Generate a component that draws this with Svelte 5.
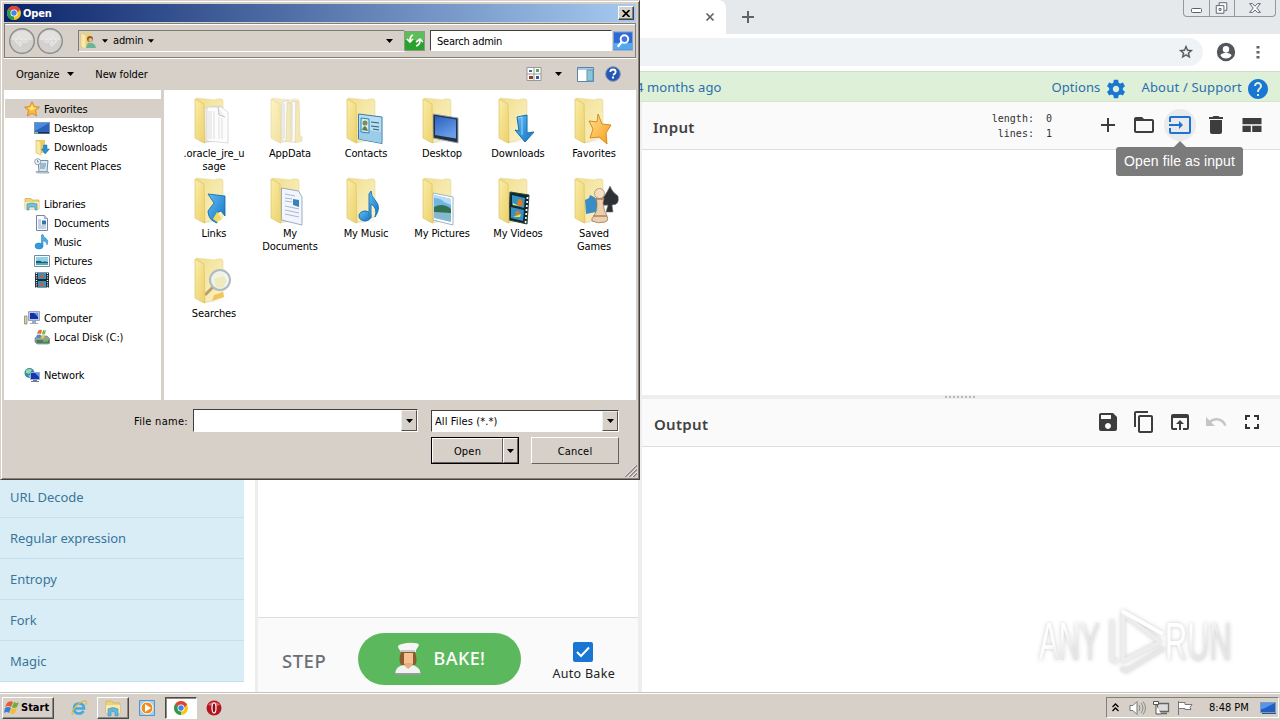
<script lang="ts">
	type Item = { icon: string; label: string; root?: boolean };

	const places: (Item | null)[] = [
		{ icon: 'star', label: 'Favorites', root: true },
		{ icon: 'desktop', label: 'Desktop' },
		{ icon: 'downloads', label: 'Downloads' },
		{ icon: 'recent', label: 'Recent Places' },
		null,
		{ icon: 'libraries', label: 'Libraries', root: true },
		{ icon: 'document', label: 'Documents' },
		{ icon: 'music', label: 'Music' },
		{ icon: 'picture', label: 'Pictures' },
		{ icon: 'video', label: 'Videos' },
		null,
		{ icon: 'computer', label: 'Computer', root: true },
		{ icon: 'disk', label: 'Local Disk (C:)' },
		null,
		{ icon: 'network', label: 'Network', root: true }
	];

	const files = [
		{ kind: 'oracle', lines: ['.oracle_jre_u', 'sage'] },
		{ kind: 'appdata', lines: ['AppData'] },
		{ kind: 'contacts', lines: ['Contacts'] },
		{ kind: 'desktop', lines: ['Desktop'] },
		{ kind: 'downloads', lines: ['Downloads'] },
		{ kind: 'favorites', lines: ['Favorites'] },
		{ kind: 'links', lines: ['Links'] },
		{ kind: 'documents', lines: ['My', 'Documents'] },
		{ kind: 'music', lines: ['My Music'] },
		{ kind: 'pictures', lines: ['My Pictures'] },
		{ kind: 'videos', lines: ['My Videos'] },
		{ kind: 'games', lines: ['Saved', 'Games'] },
		{ kind: 'searches', lines: ['Searches'] }
	];

	const operations = ['URL Decode', 'Regular expression', 'Entropy', 'Fork', 'Magic'];

	// 24x24 outlines used by the pane headers
	const inputIcons = [
		{ name: 'add', d: 'M19 13h-6v6h-2v-6H5v-2h6V5h2v6h6v2z' },
		{ name: 'folder', d: 'M20 6h-8l-2-2H4c-1.1 0-2 .9-2 2v12c0 1.1.9 2 2 2h16c1.1 0 2-.9 2-2V8c0-1.1-.9-2-2-2zm0 12H4V8h16v10z' },
		{ name: 'input', d: 'M21 3.01H3c-1.1 0-2 .9-2 2V9h2V4.99h18v14.03H3V15H1v4.01c0 1.1.9 1.98 2 1.98h18c1.1 0 2-.88 2-1.98v-14c0-1.11-.9-2-2-2zM11 16l4-4-4-4v3H1v2h10v3z' },
		{ name: 'delete', d: 'M6 19c0 1.1.9 2 2 2h8c1.1 0 2-.9 2-2V7H6v12zM19 4h-3.5l-1-1h-5l-1 1H5v2h14V4z' },
		{ name: 'layout', d: 'M2.5 5h19v6.3h-19zM2.5 12.7h8.3V19H2.5zM12.2 12.7h9.3V19h-9.3z' }
	];
	const outputIcons = [
		{ name: 'save', d: 'M17 3H5c-1.11 0-2 .9-2 2v14c0 1.1.89 2 2 2h14c1.1 0 2-.9 2-2V7l-4-4zm-5 16c-1.66 0-3-1.34-3-3s1.34-3 3-3 3 1.34 3 3-1.34 3-3 3zm3-10H5V5h10v4z' },
		{ name: 'copy', d: 'M16 1H4c-1.1 0-2 .9-2 2v14h2V3h12V1zm3 4H8c-1.1 0-2 .9-2 2v14c0 1.1.9 2 2 2h11c1.1 0 2-.9 2-2V7c0-1.1-.9-2-2-2zm0 16H8V7h11v14z' },
		{ name: 'popup', d: 'M19 4H5c-1.11 0-2 .9-2 2v12c0 1.1.89 2 2 2h4v-2H5V8h14v10h-4v2h4c1.1 0 2-.9 2-2V6c0-1.1-.89-2-2-2zm-7 6l-4 4h3v6h2v-6h3l-4-4z' },
		{ name: 'undo', d: 'M12.5 8c-2.65 0-5.05.99-6.9 2.6L2 7v9h9l-3.62-3.62c1.39-1.16 3.16-1.88 5.12-1.88 3.54 0 6.55 2.31 7.6 5.5l2.37-.78C21.08 11.03 17.15 8 12.5 8z' },
		{ name: 'fullscreen', d: 'M6 10V6h4M14 6h4v4M18 14v4h-4M10 18H6v-4' }
	];
	const help = 'M12 2C6.48 2 2 6.48 2 12s4.48 10 10 10 10-4.48 10-10S17.52 2 12 2zm1 17h-2v-2h2v2zm2.07-7.75l-.9.92C13.45 12.9 13 13.5 13 15h-2v-.5c0-1.1.45-2.1 1.17-2.83l1.24-1.26c.37-.36.59-.86.59-1.41 0-1.1-.9-2-2-2s-2 .9-2 2H8c0-2.21 1.79-4 4-4s4 1.79 4 4c0 .88-.36 1.68-.93 2.25z';
	const gear = 'M19.43 12.98c.04-.32.07-.64.07-.98s-.03-.66-.07-.98l2.11-1.65c.19-.15.24-.42.12-.64l-2-3.46c-.12-.22-.39-.3-.61-.22l-2.49 1c-.52-.4-1.08-.73-1.69-.98l-.38-2.65C14.46 2.18 14.25 2 14 2h-4c-.25 0-.46.18-.49.42l-.38 2.65c-.61.25-1.17.59-1.69.98l-2.49-1c-.23-.09-.49 0-.61.22l-2 3.46c-.13.22-.07.49.12.64l2.11 1.65c-.04.32-.07.65-.07.98s.03.66.07.98l-2.11 1.65c-.19.15-.24.42-.12.64l2 3.46c.12.22.39.3.61.22l2.49-1c.52.4 1.08.73 1.69.98l.38 2.65c.03.24.24.42.49.42h4c.25 0 .46-.18.49-.42l.38-2.65c.61-.25 1.17-.59 1.69-.98l2.49 1c.23.09.49 0 .61-.22l2-3.46c.12-.22.07-.49-.12-.64l-2.11-1.65zM12 15.5c-1.93 0-3.5-1.57-3.5-3.5s1.57-3.5 3.5-3.5 3.5 1.57 3.5 3.5-1.57 3.5-3.5 3.5z';

	let autoBake = $state(true);
	let filename = $state('');
</script>

{#snippet arrow()}
	<svg class="arrow" width="7" height="4" viewBox="0 0 7 4"><path d="M0 0h7L3.5 4z" fill="#000" /></svg>
{/snippet}

{#snippet chrome(size: number)}
	<svg width={size} height={size} viewBox="0 0 16 16">
		<circle cx="8" cy="8" r="7" fill="#f5c71a" />
		<path d="M8 8 L1.94 4.5 A7 7 0 0 1 14.06 4.5z" fill="#dc4437" />
		<path d="M8 8 L1.94 4.5 A7 7 0 0 0 8 15z" fill="#2a9a50" />
		<path d="M8 4.5h6.06L11 8H8z" fill="#dc4437" />
		<circle cx="8" cy="8" r="3.5" fill="#fff" />
		<circle cx="8" cy="8" r="2.7" fill="#4384e8" />
	</svg>
{/snippet}

{#snippet smallIcon(name: string)}
	<svg width="16" height="16" viewBox="0 0 16 16">
		{#if name === 'star'}
			<path d="M8 .8l2.2 4.7 5.2.6-3.9 3.5 1.2 5.4L8 12.3 3.3 15l1.2-5.4L.6 6.1l5.2-.6z" fill="#fbbc3c" stroke="#d98520" stroke-width=".9" />
			<path d="M8 3l1.3 3.3 3 .5-5 3-3-3 2.5-.5z" fill="#ffe684" />
		{:else if name === 'desktop'}
			<rect x=".5" y="2.5" width="15" height="11" fill="#2d62bd" stroke="#7898b4" />
			<path d="M1 3h14L3 10l-2 1z" fill="#4b8add" />
			<path d="M1 12h14v1.5H1z" fill="#18315c" /><path d="M1 12h3v1.5H1z" fill="#8bd07f" />
		{:else if name === 'downloads'}
			<path d="M2 1h9v13H2z" fill="#e9ce68" /><path d="M2 1l5 2v13l-5-2z" fill="#f9e9a2" stroke="#d8b74d" stroke-width=".6" />
			<path d="M9.5 6H13v4h2.5l-4.3 5-3.7-5h2z" fill="#2a90dc" stroke="#1768ad" stroke-width=".5" />
		{:else if name === 'recent'}
			<path d="M4 2.5h10L13 14H5z" fill="#dce9f3" stroke="#7290a6" />
			<path d="M6 6h6M6 8h6M6 10h5" stroke="#6686a4" /><path d="M2 13.5h11q2 0 2 1.5H4q-2 0-2-1.5z" fill="#c5d7e4" stroke="#718ba0" stroke-width=".6" />
			<circle cx="3.7" cy="3.7" r="3" fill="#eff6fb" stroke="#789" stroke-width=".8" /><path d="M3.5 2v2H5" stroke="#567" stroke-width=".7" fill="none" />
		{:else if name === 'libraries'}
			<path d="M1 2.5h6L8 4h7v9H1z" fill="#eed67c" stroke="#c9a94c" stroke-width=".7" /><path d="M1 6h14v7H1z" fill="#f9e9ad" />
			<path d="M3 8q5-2 10 0v6h-2v-3H5v3H3z" fill="#72c2dc" stroke="#3a91b4" stroke-width=".6" />
		{:else if name === 'document'}
			<path d="M2.5.5h8l3 3v12h-11z" fill="#f8fbff" stroke="#7387a3" /><path d="M10.5.5v3h3" fill="#cad7e8" stroke="#7387a3" stroke-width=".6" />
			<path d="M4 5h3M4 7h3M4 9h3M4 11h8M4 13h8" stroke="#91a8c5" /><path d="M8 5.5h4v4H8z" fill="#3274ac" />
		{:else if name === 'music'}
			<ellipse cx="5" cy="12" rx="4" ry="3" fill="#2c9de0" stroke="#176eae" stroke-width=".5" />
			<path d="M7.5 1L9 .5q.5 3 3 4 3 2 1 6.5 0-3.5-4-4.5v6L7.500 12z" fill="#48aee6" stroke="#2277ad" stroke-width=".5" />
		{:else if name === 'picture'}
			<path d="M.5 2.5h15v11H.5z" fill="#fff" stroke="#738ca5" /><path d="M2 4h12v8H2z" fill="#8dd1ed" />
			<path d="M2 8q5-1 6 1 3-1 6 0v3H2z" fill="#1b606f" /><path d="M2 10h12v2H2z" fill="#58a8b0" />
		{:else if name === 'video'}
			<path d="M1 .5h14v15H1z" fill="#142936" /><path d="M4 1h8v6H4zM4 9h8v6H4z" fill="#3d90ba" />
			<path d="M5 6l3-4 3 4zM5 14l2-4 4 4z" fill="#bb6049" /><path d="M2.5 1v15M13.5 1v15" stroke="#fff" stroke-width="1.3" stroke-dasharray="1 1.3" />
		{:else if name === 'computer'}
			<path d="M.5 6H3v8H.5z" fill="#d8d49c" stroke="#77806e" stroke-width=".7" /><path d="M4.5 1.5h11v9h-11z" fill="#bac7de" stroke="#9aa5b9" />
			<path d="M6 3h8v6H6z" fill="#1530aa" /><path d="M10 3h4v4z" fill="#6191ed" /><path d="M8 11h4v2h2v1H6v-1h2z" fill="#9cabb8" />
		{:else if name === 'disk'}
			<path d="M1 9l3-2h9l3 3v4l-2 1H3l-2-2z" fill="#95a09d" stroke="#66736e" stroke-width=".6" /><path d="M2 11h13v3H3z" fill="#477d59" /><path d="M9 12h5" stroke="#7fe25c" />
			<path d="M4 2q2-2 4-1L7 5Q5 4 3 5z" fill="#ee6b38" /><path d="M9 1q2 1 3 0l-1 4q-2 1-3 0z" fill="#6bbd44" /><path d="M3 6q2-1 4 0L6 9q-2-1-4 0z" fill="#3b8dd9" /><path d="M8 6q2 1 3 0l-1 3q-2 1-3 0z" fill="#f5c638" />
		{:else}
			<circle cx="5.5" cy="6" r="5" fill="#318bac" /><path d="M2 3q4-2 6 0L5 7 2 6zM4 8l4 1-2 2z" fill="#9bd8a0" />
			<path d="M6.5 5.5h9v7h-9z" fill="#1636b6" stroke="#98abc8" /><path d="M11 6h4v4z" fill="#6192ef" /><path d="M9 13h4v1h2v1H7v-1h2z" fill="#687c98" />
		{/if}
	</svg>
{/snippet}

{#snippet folderIcon(kind: string)}
	<svg width="50" height="50" viewBox="0 0 50 50" class:faded={kind === 'appdata'}>
		<defs>
			<linearGradient id="front" x2="1" y2="1"><stop stop-color="#fbeda4" /><stop offset="1" stop-color="#ecd06b" /></linearGradient>
			<linearGradient id="back" y2="1"><stop stop-color="#f0de8c" /><stop offset="1" stop-color="#fbf3ca" /></linearGradient>
			<linearGradient id="blue" x2="1" y2="1"><stop stop-color="#62bcf3" /><stop offset="1" stop-color="#1173c5" /></linearGradient>
			<linearGradient id="screen" x2=".5" y2="1"><stop stop-color="#2860bd" /><stop offset="1" stop-color="#6b9deb" /></linearGradient>
			<linearGradient id="gold" y2="1"><stop stop-color="#ffe492" /><stop offset="1" stop-color="#f59b1c" /></linearGradient>
			<linearGradient id="shade"><stop stop-color="#999" stop-opacity=".45" /><stop offset="1" stop-color="#fff" stop-opacity="0" /></linearGradient>
		</defs>
		<path d="M14 46l15-15 17 4-5 9z" fill="url(#shade)" opacity=".5" />
		<path d="M6 1l19 2 1-1h6l1 2v36L14 46z" fill="url(#back)" stroke="#e3d392" stroke-width=".5" />
		{#if kind === 'oracle'}
			<path d="M14 11l17-2 2 34-19 2z" fill="#ededed" stroke="#c8c8c8" stroke-width=".5" /><path d="M17 10h14l7 5v31l-21-2z" fill="#fcfcfc" stroke="#c8c8c8" stroke-width=".6" />
			<path d="M28 10l1 8 6 2" fill="#eee" stroke="#c4c4c4" /><path d="M19 14v28M21 14v28M24 14v28M29 20v22M32 21v21" stroke="#dedede" />
		{:else if kind === 'appdata'}
			<path d="M16 5l6-2v41h-6zM25 5l5-1v41h-6z" fill="#fafafa" stroke="#b3b3ac" stroke-width=".7" /><path d="M18 6v36M26 6v37" stroke="#b9bfd0" /><path d="M21 5l4 2v38l-5-1zM30 5l3-1 1 35 2 1v4l-7 2z" fill="#eedc91" stroke="#ceb969" stroke-width=".5" />
		{:else if kind === 'contacts'}
			<path d="M16.5 17L40 20v26.5L16.5 42z" fill="#b7def1" stroke="#357eaa" /><path d="M17 32l22 3v11l-22-4z" fill="#9ccde8" />
			<path d="M19 21l8 1v14l-8-1z" fill="#dcebd9" stroke="#2f84bc" /><circle cx="23" cy="26" r="2.5" fill="#768c66" /><path d="M20 33q3-8 6 1z" fill="#587d65" /><path d="M29 25l8 1M29 29l8 1M31 32l6 1" stroke="#315e81" />
		{:else if kind === 'desktop'}
			<path d="M15 17l25 4v25l-25-5z" fill="#26313f" stroke="#91a5b7" /><path d="M17 19l21 3.5v19L17 38z" fill="url(#screen)" />
		{:else if kind === 'downloads'}
			<path d="M23 20l10-2v18l7-1-9 10-10-12 4 1z" fill="url(#blue)" stroke="#146eaf" stroke-linejoin="round" /><path d="M24 21l4-1v18" stroke="#9bd8fb" fill="none" />
		{:else if kind === 'favorites'}
			<path d="M28 17l4 10 9 1-5 8 1 11-8-7-9 1 3-9-4-8 8 1z" fill="url(#gold)" stroke="#da8b19" stroke-linejoin="round" />
		{:else if kind === 'links'}
			<path d="M18 17l17 2v20l-4-5q-7 1-4 12-9-3-9-12l6-8z" fill="url(#blue)" stroke="#0c65a9" stroke-width=".8" /><path d="M27 35l5 7-5 3-4-3z" fill="#efdc5c" />
		{:else if kind === 'documents'}
			<path d="M15.5 11l17 3 3.5 6v28l-20.5-5z" fill="#f1f5fd" stroke="#7a8da8" stroke-width=".7" /><path d="M19 17l10 2M19 21l7 1M19 24l7 1M19 29l14 3M19 33l14 3M19 37l14 3" stroke="#aab7cd" /><path d="M27 22l6 1v7l-6-2z" fill="#3984b5" />
		{:else if kind === 'music'}
			<ellipse cx="23" cy="39" rx="6" ry="5" fill="url(#blue)" stroke="#126cae" /><path d="M27 17l2-3q0 5 4 9 7 7 0 17 3-9-4-13v14l-2-2z" fill="url(#blue)" stroke="#2379ba" />
		{:else if kind === 'pictures'}
			<path d="M15 16l20 4v28l-20-5z" fill="#fff" stroke="#9eb6c6" /><path d="M16 18l17 4v13l-17-3z" fill="#71b4e7" /><path d="M16 21q7 0 10 4l7 3v-6l-17-4z" fill="#b8dcf3" /><path d="M16 30q9-5 17 2v12l-17-4z" fill="#327253" /><path d="M16 35l17 1v9l-17-4z" fill="#83bad0" />
		{:else if kind === 'videos'}
			<path d="M16 15l19 3-2 29-18-4z" fill="#10272d" stroke="#343" /><path d="M18 18l13 3-1 10-12-3zM17 30l13 3-1 11-12-3z" fill="#3193c4" /><path d="M24 22l4 1 1 7-6-2zM22 34h3l1 4-5 1z" fill="#de7b24" /><path d="M19 26l6 3-6-1zM19 40l8-3-1 3z" fill="#f2df55" /><path d="M33.5 20l-2 26" stroke="#fff" stroke-width="1.7" stroke-dasharray="2 2" />
		{:else if kind === 'games'}
			<path d="M15 23l4-2 1-3 4 2 4 3-2 12-10 2z" fill="#398dc4" /><path d="M40 9q-2 5-7 12-4 9 5 7l-2 7h7l-1-7q8 0 6-9-6-4-8-10z" fill="#2d3034" stroke="#757575" stroke-width=".6" />
			<path d="M26 21h8l-1 5q1 9 4 13 2 5-2 6-7 2-13-1-1-3 2-5 4-6 3-13z" fill="#ecd0ad" stroke="#93775a" stroke-width=".8" /><circle cx="29.5" cy="16.5" r="5" fill="#f5dfc4" stroke="#a28160" stroke-width=".7" /><path d="M25 22h9M23 39h14" stroke="#a98563" stroke-width="1.5" />
		{:else if kind === 'searches'}
			<path d="M15 38l8-8" stroke="#b9a06a" stroke-width="3" /><circle cx="30" cy="23" r="10" fill="#edf5ee" fill-opacity=".85" stroke="#aebac1" stroke-width="2" /><path d="M24 22l10-3 3 5-4 7-7-1z" fill="#f1e5ad" opacity=".7" /><path d="M24 38l9-3 1 5-12 4z" fill="#eec659" />
		{/if}
		<path d="M5 2l9 5 1 39-3-1-7-4z" fill="url(#front)" stroke="#d9bd62" stroke-width=".6" />
	</svg>
{/snippet}

<main class="screen">
	<div class="browser">
		<div class="tabs">
			<div class="tab">
				<svg width="10" height="10" viewBox="0 0 10 10"><path d="M1.5 1.5l7 7M8.5 1.5l-7 7" stroke="#5f6368" stroke-width="1.7" /></svg>
			</div>
			<svg class="newtab" width="14" height="14" viewBox="0 0 14 14"><path d="M7 1v12M1 7h12" stroke="#5f6368" stroke-width="2" /></svg>
			<div class="controls">
				<svg width="25" height="16" viewBox="0 0 25 16"><rect x="7.5" y="8.5" width="10" height="4" rx="1" fill="#fff" stroke="#5a626b" /></svg>
				<svg width="25" height="16" viewBox="0 0 25 16"><path d="M9.5 5V2.5h8v8H15M6.5 5.5h8v8h-8zM9.5 8.5h2v2h-2z" fill="#fff" stroke="#5a626b" /></svg>
				<svg width="41" height="16" viewBox="0 0 41 16"><path d="M15 3.5h3l2.5 2.7L23 3.5h3L22.300 8l3.700 4.500h-3L20.500 10 18 12.500h-3L18.700 8z" fill="#fff" stroke="#5a626b" /></svg>
			</div>
		</div>
		<div class="address">
			<div class="omnibox">
				<svg width="16" height="16" viewBox="0 0 24 24"><path d="M22 9.24l-7.19-.62L12 2 9.19 8.63 2 9.24l5.46 4.73L5.82 21 12 17.27 18.18 21l-1.63-7.03L22 9.24zM12 15.4l-3.76 2.27 1-4.28-3.32-2.88 4.38-.38L12 6.1l1.71 4.04 4.38.38-3.32 2.88 1 4.28L12 15.4z" fill="#4d5257" stroke="#4d5257" stroke-width=".5" /></svg>
			</div>
			<svg class="avatar" width="22" height="22" viewBox="0 0 24 24"><path d="M12 2a10 10 0 1 0 0 20 10 10 0 0 0 0-20zm0 3.5a3.5 3.5 0 1 1 0 7 3.5 3.5 0 0 1 0-7zM12 19.200a7.200 7.200 0 0 1-6-3.200c.03-2 4-3.100 6-3.100s5.970 1.100 6 3.100a7.200 7.200 0 0 1-6 3.200z" fill="#53575c" /></svg>
			<svg width="4" height="16" viewBox="0 0 4 16"><path d="M.5 2h3v2.500h-3zM.5 7h3v2.500h-3zM.5 12h3v2.500h-3z" fill="#5f6368" /></svg>
		</div>
		<div class="banner">
			<span class="build">4 months ago</span>
			<span class="options">Options</span>
			<svg width="22" height="22" viewBox="0 0 24 24"><path d={gear} fill="#1976d2" /></svg>
			<span class="about">About / Support</span>
			<svg width="24" height="24" viewBox="0 0 24 24"><path d={help} fill="#1976d2" /></svg>
		</div>

		<div class="workspace">
			<ul class="operations">
				{#each operations as op}
					<li>{op}</li>
				{/each}
			</ul>
			<div class="recipe">
				<div class="bake-bar">
					<span class="step">STEP</span>
					<button class="bake" type="button">
						<svg width="28" height="34" viewBox="0 0 28 34">
							<path d="M7 10h14q3 9 0 13H7q-3-5 0-13z" fill="#8a5b2e" /><path d="M10 11h9v11l-4 4-5-4z" fill="#f5c193" /><path d="M11 21h7v6h-7z" fill="#e8ad7b" />
							<path d="M1 33q0-9 9-10l4 4 5-4q7 2 8 10z" fill="#f1f2f3" /><path d="M1 31h26v2H1z" fill="#989b9c" />
							<path d="M5 7q-3-4 3-5 7-2 12-1 7 0 4 4l-2 3v2H7z" fill="#f6f6f7" /><path d="M7 8h14v2H7z" fill="#c9cccf" />
						</svg>
						<span>BAKE!</span>
					</button>
					<label class="auto">
						<input type="checkbox" bind:checked={autoBake} />
						<svg width="20" height="20" viewBox="0 0 20 20"><rect width="20" height="20" rx="2" fill="#1976d2" />{#if autoBake}<path d="M4 10l4 4 8-8.5" fill="none" stroke="#fff" stroke-width="2" />{/if}</svg>
						<span>Auto Bake</span>
					</label>
				</div>
			</div>
			<div class="io">
				<div class="pane-head">
					<span class="title">Input</span>
					<pre>length:  0
 lines:  1</pre>
					<div class="pane-icons">
						{#each inputIcons as icon}
							<span class="pane-icon" class:active={icon.name === 'input'}>
								<svg width="24" height="24" viewBox="0 0 24 24"><path d={icon.d} /></svg>
								{#if icon.name === 'input'}<span class="tooltip">Open file as input</span>{/if}
							</span>
						{/each}
					</div>
				</div>
				<div class="input-area"></div>
				<div class="splitter"></div>
				<div class="pane-head output">
					<span class="title">Output</span>
					<div class="pane-icons">
						{#each outputIcons as icon}
							<span class="pane-icon {icon.name}">
								<svg width="24" height="24" viewBox="0 0 24 24"><path d={icon.d} /></svg>
							</span>
						{/each}
					</div>
				</div>
			</div>
		</div>
	</div>

	<svg class="watermark" width="230" height="76" viewBox="0 0 230 76">
		<defs><linearGradient id="wm" y2="1"><stop offset=".35" stop-color="#fff" /><stop offset=".6" stop-color="#e6e6e6" /></linearGradient></defs>
		<g fill="url(#wm)">
			<text transform="translate(9 57) scale(.56 1)">ANY</text>
			<text transform="translate(135 57) scale(.58 1)">RUN</text>
		</g>
		<g fill="none" stroke-width="4" stroke-linejoin="round">
			<path d="M82 17v40l6 2" stroke="#ececec" /><path d="M93 11v47l37-19z" stroke="#ededed" /><path d="M92 8l41 23" stroke="#fff" /><path d="M91 65l5 3 38-23" stroke="#e7e7e7" />
		</g>
	</svg>

	<section class="dialog">
		<header class="titlebar">
			{@render chrome(16)}
			<span>Open</span>
			<button type="button" class="close" aria-label="Close"><svg width="8" height="7" viewBox="0 0 8 7"><path d="M.5 0l7 7M7.5 0l-7 7" stroke="#000" stroke-width="1.7" /></svg></button>
		</header>
		<div class="navbar">
			<div class="history">
				{#each ['M17 12H8M11.5 8l-4 4 4 4', 'M7 12h9M12.5 8l4 4-4 4'] as d}
					<svg width="28" height="28" viewBox="0 0 24 24"><circle cx="12" cy="12" r="10.5" fill="#d2d1ce" stroke="#8c8d8d" stroke-width="1.2" /><path d="M3 11a9 8 0 0 1 18 0q-9 2-18 0z" fill="#e2e1df" /><path {d} fill="none" stroke="#ededeb" stroke-width="2.5" /><path {d} fill="none" stroke="#bfbfbd" stroke-width=".6" /></svg>
				{/each}
			</div>
			<div class="path">
				<svg width="18" height="18" viewBox="0 0 18 18"><path d="M2 1h11v15H2z" fill="#e9d17e" /><path d="M2 1l5 2v14l-5-2z" fill="#fae9a4" stroke="#ddc062" stroke-width=".5" /><circle cx="11" cy="7" r="3" fill="#865d3b" /><circle cx="11.5" cy="8" r="2" fill="#e9b788" /><path d="M7 16q1-6 5-5 4 0 5 5z" fill="#66b79a" /></svg>
				{@render arrow()}
				<span>admin</span>
				{@render arrow()}
				<span class="history-arrow">{@render arrow()}</span>
			</div>
			<svg class="refresh" width="21" height="20" viewBox="0 0 21 20"><rect x=".5" y=".5" width="20" height="19" fill="#27a32b" stroke="#8b9b88" /><path d="M1 1h19v8H1z" fill="#5cbd59" /><path d="M9 4q-3 1-3 6M3 8l3 3 3-3M12 15q4-1 4-6M12 11l4-3 3 3" fill="none" stroke="#fff" stroke-width="1.7" /></svg>
			<div class="search">Search admin</div>
			<svg class="go" width="20" height="20" viewBox="0 0 21 20"><rect x=".5" y=".5" width="20" height="19" fill="#2e68d4" stroke="#83a4d8" /><path d="M1 12h19v7H1z" fill="#54a9ed" /><circle cx="12" cy="8" r="4" fill="#3b77df" stroke="#fff" stroke-width="2" /><path d="M9 11l-4 5" stroke="#fff" stroke-width="2.5" /></svg>
		</div>
		<div class="toolbar">
			<span>Organize</span>
			{@render arrow()}
			<span class="new-folder">New folder</span>
			<svg class="view" width="16" height="16" viewBox="0 0 16 16"><path d="M1 1.5h14v13H1z" fill="#fff" stroke="#999" /><path d="M8 1v14M1 8h14" stroke="#999" /><path d="M3 4h3v2H3z" fill="#3c7389" /><path d="M10 3h3v3h-3z" fill="#5ba75d" /><path d="M3 10h4v3H3z" fill="#993b1c" /><path d="M10 10h3v3h-3z" fill="#2b61a0" /></svg>
			<span class="view-arrow">{@render arrow()}</span>
			<svg width="17" height="15" viewBox="0 0 17 15"><path d="M.5.5h16v14H.5z" fill="#fff" stroke="#5983ab" /><path d="M1 1h15v2H1z" fill="#a9c9e3" /><path d="M10 3h6v11h-6z" fill="#86c6d9" stroke="#6595b1" /></svg>
			<svg class="help" width="16" height="16" viewBox="0 0 16 16"><circle cx="8" cy="8" r="7.3" fill="#2856b5" stroke="#7b90b6" /><path d="M5.3 6q0-2.5 2.7-2.5T10.7 6Q10.7 7.4 8 9" fill="none" stroke="#fff" stroke-width="1.8" /><path d="M7 10.5h2v2H7z" fill="#fff" /></svg>
		</div>
		<div class="body">
			<nav>
				{#each places as place, i}
					<div class="place" class:root={place?.root} class:selected={i === 0}>
						{#if place}
							{@render smallIcon(place.icon)}
							<span>{place.label}</span>
						{/if}
					</div>
				{/each}
			</nav>
			<div class="files">
				{#each files as file}
					<div class="file">
						{@render folderIcon(file.kind)}
						{#each file.lines as line}
							<span>{line}</span>
						{/each}
					</div>
				{/each}
			</div>
		</div>
		<footer>
			<label for="filename">File name:</label>
			<div class="combo name">
				<input id="filename" type="text" bind:value={filename} />
				<button type="button" aria-label="Recent names">{@render arrow()}</button>
			</div>
			<div class="combo type">
				<span>All Files (*.*)</span>
				<button type="button" aria-label="File types">{@render arrow()}</button>
			</div>
			<div class="split">
				<button type="button">Open</button>
				<button type="button" class="more" aria-label="Open options">{@render arrow()}</button>
			</div>
			<button type="button" class="cancel">Cancel</button>
		</footer>
		<svg class="grip" width="12" height="12" viewBox="0 0 12 12"><path d="M0 12L12 0M4 12l8-8M8 12l4-4" stroke="#888480" stroke-width="1.6" /><path d="M-1 12L12-1M3 12l9-9M7 12l5-5" stroke="#fff" stroke-width=".7" /></svg>
	</section>

	<div class="taskbar">
		<div class="start">
			<svg width="16" height="16" viewBox="0 0 16 16"><path d="M3 3q3-3 6-1L7 7Q4 5 1 7z" fill="#e85b2c" /><path d="M10 2q3 2 5 0l-2 5q-3 2-5 0z" fill="#72ad36" /><path d="M1 8q3-2 6 0l-2 5q-2-2-5 0z" fill="#3d7cce" /><path d="M8 8q3 2 5 0l-2 5q-3 2-5 0z" fill="#f3bf2d" /></svg>
			<span>Start</span>
		</div>
		<svg class="ie" width="18" height="18" viewBox="0 0 18 18"><path d="M5 9.5h9q0-5-5-5t-5 5 5 5q3 0 4.5-2.5" fill="none" stroke="#45a9e1" stroke-width="2.6" /><path d="M3 16q-3-2 3-9 7-6 10-5 1 1 0 4" fill="none" stroke="#e0b83f" stroke-width="1.2" /></svg>
		<div class="task">
			<svg width="18" height="18" viewBox="0 0 18 18"><path d="M2 2h6l1 2h7v10H2z" fill="#edd277" stroke="#d0ad4c" stroke-width=".6" /><path d="M2 6h14v8H2z" fill="#f9e9ac" /><path d="M4 10q5-3 10 0v7h-3v-4H7v4H4z" fill="#64b8df" stroke="#3d91bd" stroke-width=".6" /></svg>
		</div>
		<svg class="media" width="16" height="16" viewBox="0 0 16 16"><path d="M.5.5h15v15H.5z" fill="#a3cfed" stroke="#5794c1" /><circle cx="8" cy="8" r="6" fill="#f38a1c" stroke="#fff" /><path d="M6 4l6 4-6 4z" fill="#fff" /></svg>
		<div class="task pressed">{@render chrome(16)}</div>
		<svg class="opera" width="16" height="16" viewBox="0 0 16 16"><circle cx="8" cy="8" r="7.5" fill="#b41521" /><path d="M2 5a7 6 0 0 1 12 0q-5 2-12 0z" fill="#da666a" /><ellipse cx="8" cy="8" rx="2" ry="5" fill="#8b0d18" stroke="#fff" stroke-width="1.2" /></svg>
		<div class="tray">
			<svg width="7" height="9" viewBox="0 0 7 9"><path d="M.5 4l3-3 3 3M.5 8l3-3 3 3" fill="none" stroke="#000" stroke-width="1.3" /></svg>
			<svg class="sound" width="17" height="16" viewBox="0 0 17 16"><path d="M1 5.5h3l4-4v13l-4-4H1z" fill="#fff" stroke="#777" /><path d="M10 5q2 3 0 6M12 3q4 5 0 10M14 1.5q5 6.5 0 13" fill="none" stroke="#888" /></svg>
			<svg class="net" width="17" height="16" viewBox="0 0 17 16"><path d="M4.5 3.5h11v8h-11zM8 13.5h6" fill="#ddd" stroke="#666" stroke-width="1.3" /><path d="M.5 1.5v3h5v-3zM3 5v9h5" fill="#fff" stroke="#555" /></svg>
			<svg class="flag" width="17" height="16" viewBox="0 0 17 16"><path d="M1.5 1v14M2 2.5h6v2h7l-2 3 1 2H8v-1H2" fill="#fff" stroke="#777" /></svg>
			<span>8:48 PM</span>
			<svg class="show" width="16" height="14" viewBox="0 0 16 14"><path d="M.5 1.5h15v10H.5z" fill="#225ec0" stroke="#829cb7" /><path d="M1 2h14L3 8H1z" fill="#5195ed" /><path d="M2 12h14v1H2z" fill="#34537c" /></svg>
		</div>
	</div>
</main>

<style>
	:global(body) {
		overflow: hidden;
	}

	.screen {
		position: relative;
		width: 1280px;
		height: 720px;
		display: flex;
		flex-direction: column;
		overflow: hidden;
		background: #fff;
		font-family: 'Noto Sans', sans-serif;
	}

	.screen * {
		box-sizing: border-box;
	}

	svg {
		flex: none;
		display: block;
	}

	button {
		font: inherit;
		color: inherit;
		padding: 0;
	}

	.browser {
		height: 692px;
		display: flex;
		flex-direction: column;
	}

	.tabs {
		height: 34px;
		flex: none;
		display: flex;
		background: #e6e9ec;
	}

	.tab {
		width: 726px;
		display: flex;
		align-items: center;
		justify-content: flex-end;
		padding-right: 11px;
		background: #fff;
		border-top-right-radius: 8px;
	}

	.newtab {
		margin: 10px 0 0 15px;
	}

	.controls {
		display: flex;
		height: 17px;
		margin: 0 4px 0 auto;
		border: 1px solid #93989d;
		border-top: 0;
		border-radius: 0 0 4px 4px;
	}

	.controls svg + svg {
		border-left: 1px solid #93989d;
	}

	.address {
		height: 37px;
		flex: none;
		display: flex;
		align-items: center;
		padding: 0 20px 4px 0;
	}

	.omnibox {
		width: 1203px;
		height: 28px;
		margin-top: 3px;
		display: flex;
		align-items: center;
		justify-content: flex-end;
		padding-right: 9px;
		background: #f0f3f5;
		border-radius: 0 14px 14px 0;
	}

	.avatar {
		margin: 2px auto 0 12px;
	}

	.address > svg:last-child {
		margin-top: 3px;
	}

	.banner {
		height: 31px;
		flex: none;
		display: flex;
		align-items: center;
		padding: 4px 10px 0 636px;
		background: #dff0d8;
		border-top: 1px solid #cfddca;
		border-bottom: 1px solid #d4e4ce;
		color: #286fae;
		font-size: 13px;
	}

	.banner span {
		margin-top: -3px;
		white-space: nowrap;
	}

	.banner .build {
		letter-spacing: 0.1px;
	}

	.banner .options {
		margin-right: 5px;
		margin-left: auto;
		letter-spacing: 0.1px;
	}

	.banner .about {
		margin-right: 4px;
		margin-left: 14px;
		letter-spacing: 0.2px;
	}

	.workspace {
		flex: 1;
		min-height: 0;
		display: flex;
	}

	.operations {
		width: 244px;
		margin: 0 14px 0 0;
		padding: 0 0 10px;
		display: flex;
		flex-direction: column;
		justify-content: flex-end;
		list-style: none;
		box-shadow: 11px 0 #fff, 14px 0 #eee;
	}

	.operations li {
		height: 41px;
		padding-left: 10px;
		border-bottom: 1px solid #c2e1ed;
		background: #d9edf7;
		color: #3a7597;
		font-size: 13px;
		line-height: 41px;
		letter-spacing: -0.05px;
	}

	.recipe {
		width: 380px;
		display: flex;
		flex-direction: column;
		justify-content: flex-end;
	}

	.bake-bar {
		height: 75px;
		display: flex;
		align-items: center;
		padding: 8px 23px 0 24px;
		background: #fafafa;
		border-top: 1px solid #ddd;
	}

	.step {
		width: 76px;
		margin-top: 3px;
		color: #6b7076;
		font-size: 18.5px;
		font-weight: 500;
		letter-spacing: 0.5px;
	}

	.bake {
		width: 163px;
		height: 52px;
		display: flex;
		align-items: center;
		justify-content: center;
		gap: 12px;
		border: 0;
		border-radius: 26px;
		background: #5cb85c;
		color: #fff;
		font-size: 18px;
		font-weight: 500;
		letter-spacing: 0.4px;
	}

	.bake span {
		margin-top: -2px;
	}

	.auto {
		margin: 6px 0 0 auto;
		display: flex;
		flex-direction: column;
		align-items: center;
		gap: 3px;
		color: #222;
		font-size: 12.5px;
		line-height: 17px;
		white-space: nowrap;
		letter-spacing: 0.3px;
	}

	.auto svg {
		margin-right: 1px;
	}

	.auto input {
		position: absolute;
		opacity: 0;
	}

	.io {
		flex: 1;
		display: flex;
		flex-direction: column;
		border-left: 4px solid #eee;
	}

	.pane-head {
		height: 48px;
		flex: none;
		display: flex;
		align-items: center;
		padding: 0 12px 0 11px;
		background: #fafafa;
		border-bottom: 1px solid #ddd;
		color: #424242;
	}

	.title {
		padding-top: 3px;
		font-size: 15px;
		font-weight: 600;
		letter-spacing: 0.3px;
	}

	.pane-head pre {
		margin: 0 40px 0 auto;
		color: #333;
		font: 10px/15px 'DejaVu Sans Mono', monospace;
	}

	.pane-icons {
		display: flex;
		gap: 4px;
		margin-bottom: 2px;
	}

	.output .pane-icons {
		margin-left: auto;
	}

	.output .title {
		padding-left: 1px;
	}

	.pane-icon {
		position: relative;
		width: 32px;
		height: 32px;
		display: grid;
		place-items: center;
		border-radius: 50%;
		fill: #3d3d3d;
	}

	.pane-icon.active {
		background: #e9eaeb;
		fill: #1c73d3;
	}

	.pane-icon.undo {
		fill: #c5c5c5;
	}

	.pane-icon.fullscreen {
		fill: none;
		stroke: #333;
		stroke-width: 2;
	}

	.tooltip {
		position: absolute;
		top: 38px;
		left: -48px;
		width: 127px;
		height: 29px;
		border-radius: 3px;
		background: #7b7b7b;
		color: #fff;
		font: 14px/28px 'Liberation Sans', Arial, sans-serif;
		letter-spacing: 0.1px;
		text-align: center;
		white-space: nowrap;
	}

	.tooltip::before {
		content: '';
		position: absolute;
		left: 58px;
		top: -6px;
		border: 6px solid transparent;
		border-top: 0;
		border-bottom-color: #7b7b7b;
	}

	.input-area {
		height: 245px;
		flex: none;
	}

	.splitter {
		height: 4px;
		flex: none;
		background: #eee;
		display: grid;
		place-items: center;
	}

	.splitter::after {
		content: '';
		width: 32px;
		height: 2px;
		background: repeating-linear-gradient(90deg, #bbb 0 2px, #eee 2px 4px);
	}

	.watermark {
		position: absolute;
		left: 1030px;
		top: 603px;
		filter: drop-shadow(0 0 2px #ccc);
		font: 53px 'Liberation Sans', Arial, sans-serif;
	}

	.dialog {
		position: absolute;
		left: 0;
		top: 0;
		width: 640px;
		height: 480px;
		display: flex;
		flex-direction: column;
		padding: 2px;
		border: 1px solid;
		border-color: #d6d0c8 #46433f #46433f #d6d0c8;
		box-shadow: inset 1px 1px #fff, inset -1px -1px #85807a;
		background: #d6d0c8;
		color: #000;
		font: 11px/13px 'DejaVu Sans Condensed', 'DejaVu Sans', sans-serif;
		letter-spacing: -0.12px;
	}

	.titlebar {
		height: 18px;
		margin: 1px;
		flex: none;
		display: flex;
		align-items: center;
		gap: 1px;
		padding: 0 2px;
		background: linear-gradient(90deg, #0a246a, #a6caf0);
		color: #fff;
		font-weight: bold;
	}

	.close {
		width: 16px;
		height: 14px;
		margin-left: auto;
		display: grid;
		place-items: center;
		background: #d6d0c8;
		border: 1px solid;
		border-color: #fff #404040 #404040 #fff;
		box-shadow: inset -1px -1px #808080;
	}

	.navbar {
		height: 35px;
		margin: 0 1px;
		flex: none;
		display: flex;
		align-items: center;
		padding: 0 0 0 3px;
		border: 1px solid #827e79;
		box-shadow: 0 1px #fff, inset 0 1px #fff;
	}

	.history {
		display: flex;
	}

	.path {
		width: 327px;
		height: 22px;
		margin-left: 14px;
		display: flex;
		align-items: center;
		gap: 5px;
		border: 1px solid;
		border-color: #7d7974 #fff #fff #7d7974;
	}

	.path > .arrow {
		width: 6px;
	}

	.history-arrow {
		margin: 0 11px 0 auto;
	}

	.refresh {
		margin: 0 5px 0 -1px;
	}

	.search {
		width: 182px;
		height: 21px;
		padding: 4px 6px 0;
		border: 1px solid #403f3d;
		border-right-color: #fff;
		border-bottom-color: #fff;
		background: #fff;
		letter-spacing: -0.25px;
	}

	.go {
		margin-left: 1px;
	}

	.toolbar {
		height: 32px;
		flex: none;
		display: flex;
		align-items: center;
		padding: 0 16px 0 13px;
	}

	.toolbar > .arrow {
		margin: 0 21px 0 8px;
	}

	.view {
		margin-left: auto;
	}

	.view-arrow {
		margin: 0 15px 0 13px;
	}

	.help {
		margin-left: 11px;
	}

	.body {
		height: 310px;
		flex: none;
		display: flex;
		gap: 3px;
		padding: 0 1px;
	}

	nav {
		width: 157px;
		padding: 9px 0 0 1px;
		background: #fff;
	}

	.place {
		height: 19px;
		display: flex;
		align-items: center;
		gap: 4px;
		padding-left: 29px;
		white-space: nowrap;
	}

	.place span {
		padding-top: 2px;
	}

	.place.root {
		padding-left: 19px;
	}

	.place.selected {
		background: #d6d0c8;
	}

	.files {
		flex: 1;
		display: grid;
		grid-template-columns: repeat(6, 76px);
		grid-auto-rows: 80px;
		padding: 8px 0 0 12px;
		background: #fff;
		overflow: hidden;
	}

	.file {
		display: flex;
		flex-direction: column;
		align-items: center;
		white-space: nowrap;
	}

	.file svg {
		margin: -1px 0 0 2px;
	}

	.faded {
		opacity: 0.65;
	}

	footer {
		display: grid;
		grid-template-columns: 185px 225px 13px 88px 12px 88px;
		grid-template-rows: 23px 27px;
		row-gap: 5px;
		padding: 9px 0 0 5px;
		align-items: center;
	}

	footer label {
		padding: 2px 5px 0 0;
		text-align: right;
		letter-spacing: 0.3px;
	}

	.combo {
		height: 22px;
		display: flex;
		border: 1px solid;
		border-color: #403f3d #fff #fff #403f3d;
		background: #fff;
	}

	.name {
		grid-column: 2;
		height: 23px;
	}

	.type {
		grid-column: 4 / 7;
		padding-left: 3px;
		line-height: 21px;
		letter-spacing: 0.1px;
	}

	.combo input {
		min-width: 0;
		flex: 1;
		border: 0;
		outline: 0;
		background: none;
		font: inherit;
	}

	.combo button {
		width: 16px;
		margin-left: auto;
		display: grid;
		place-items: center;
		background: #d6d0c8;
		border: 1px solid;
		border-color: #eee #55514c #55514c #eee;
	}

	.split {
		grid-column: 4;
		height: 27px;
		display: flex;
		border: 1px solid #000;
	}

	.split button,
	.cancel {
		height: 25px;
		flex: 1;
		padding-top: 1px;
		background: #d6d0c8;
		border: 1px solid;
		border-color: #fff #66625d #66625d #fff;
		letter-spacing: 0.2px;
	}

	.split .more {
		flex: 0 0 15px;
		display: grid;
		place-items: center;
	}

	.cancel {
		grid-column: 6;
		height: 27px;
	}

	.grip {
		position: absolute;
		right: 2px;
		bottom: 2px;
	}

	.taskbar {
		height: 28px;
		display: flex;
		align-items: center;
		padding: 2px 1px 0 2px;
		border-top: 1px solid #c4c3bd;
		box-shadow: inset 0 1px #fff;
		background: #d6d0c8;
		color: #000;
		font: 11px 'DejaVu Sans Condensed', 'DejaVu Sans', sans-serif;
	}

	.start {
		width: 52px;
		height: 22px;
		display: flex;
		align-items: center;
		gap: 1px;
		padding-left: 1px;
		border: 1px solid;
		border-color: #fff #4d4a46 #4d4a46 #fff;
		box-shadow: inset -1px -1px #8c8882;
		font-weight: bold;
	}

	.ie {
		margin: 0 9px 0 16px;
	}

	.task {
		width: 32px;
		height: 22px;
		display: grid;
		place-items: center;
		border: 1px solid;
		border-color: #fff #4d4a46 #4d4a46 #fff;
		box-shadow: inset -1px -1px #8c8882;
	}

	.task.pressed {
		border-color: #4d4a46 #fff #fff #4d4a46;
		box-shadow: inset 1px 1px #8c8882;
		background: #fff;
	}

	.media {
		margin: 0 10px;
	}

	.opera {
		margin-left: 9px;
	}

	.tray {
		width: 173px;
		height: 21px;
		margin-left: auto;
		display: flex;
		align-items: center;
		padding-left: 5px;
		border: 1px solid;
		border-color: #827e79 #fff #fff #827e79;
	}

	.sound {
		margin-left: 10px;
	}

	.net,
	.flag {
		margin-left: 7px;
	}

	.tray span {
		margin-left: 15px;
		white-space: nowrap;
	}

	.show {
		margin: 0 2px 0 auto;
	}
</style>
